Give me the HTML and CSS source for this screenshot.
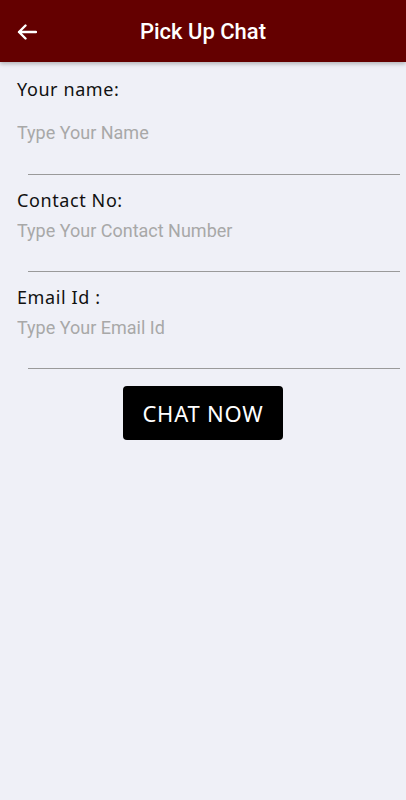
FILE: index.html
```html
<!DOCTYPE html>
<html lang="en">
<head>
    <meta charset="UTF-8">
    <meta name="viewport" content="width=device-width, initial-scale=1.0">
    <title>Pick Up Chat</title>
    <link rel="stylesheet" href="styles.css">
</head>
<body>

    <div class="app-bar">
        <button class="back-btn" aria-label="Back">
            <svg width="20" height="16" viewBox="0 0 20 16">
                <path d="M19 8H2M8.5 1.5L2 8l6.5 6.5" fill="none" stroke="#fff" stroke-width="2.4" stroke-linecap="round" stroke-linejoin="round"/>
            </svg>
        </button>
        <h1>Pick Up Chat</h1>
    </div>

    <form class="chat-form" id="chat-form">
        <div class="field first">
            <label for="name">Your name:</label>
            <input type="text" id="name" placeholder="Type Your Name">
            <div class="underline"></div>
        </div>

        <div class="field">
            <label for="contact">Contact No:</label>
            <input type="tel" id="contact" placeholder="Type Your Contact Number">
            <div class="underline"></div>
        </div>

        <div class="field">
            <label for="email">Email Id :</label>
            <input type="email" id="email" placeholder="Type Your Email Id">
            <div class="underline"></div>
        </div>

        <div class="actions">
            <button type="submit" class="chat-btn">CHAT NOW</button>
        </div>
    </form>

</body>
</html>
```

FILE: styles.css
```css
body {
    margin: 0;
    background-color: #eff0f7;
    font-family: "Noto Sans", sans-serif;
}
.app-bar {
    height: 62px;
    background-color: #640000;
    box-shadow: 0 2px 4px rgba(0, 0, 0, 0.25);
    display: flex;
    align-items: center;
    justify-content: center;
    position: relative;
}
.app-bar h1 {
    margin: 0;
    color: white;
    font-family: Roboto, sans-serif;
    font-weight: 500;
    font-size: 22px;
}
.back-btn {
    position: absolute;
    left: 17px;
    top: 24px;
    padding: 0;
    border: none;
    background: none;
    display: flex;
}
.chat-form {
    padding: 15px 6px 0 17px;
}
.field {
    display: flex;
    flex-direction: column;
}
.field label {
    font-size: 18px;
    line-height: 24px;
    letter-spacing: 0.6px;
    color: #111;
}
.field input {
    border: none;
    background: none;
    padding: 0;
    margin-top: 6px;
    height: 24px;
    font-family: Roboto, sans-serif;
    font-size: 18px;
    outline: none;
}
.field.first input {
    margin-top: 19px;
}
.field input::placeholder {
    color: #a8a8a8;
}
.underline {
    margin: 29px 0 0 11px;
    border-top: 1px solid #9a9a9a;
}
.field.first .underline {
    margin-top: 30px;
}
.field + .field {
    margin-top: 13px;
}
.actions {
    display: flex;
    justify-content: center;
    margin-top: 17px;
    padding-right: 11px;
}
.chat-btn {
    width: 160px;
    height: 54px;
    background-color: #000;
    color: white;
    border: none;
    border-radius: 4px;
    font-family: "Noto Sans", sans-serif;
    font-size: 22px;
    letter-spacing: 0.8px;
}
```
